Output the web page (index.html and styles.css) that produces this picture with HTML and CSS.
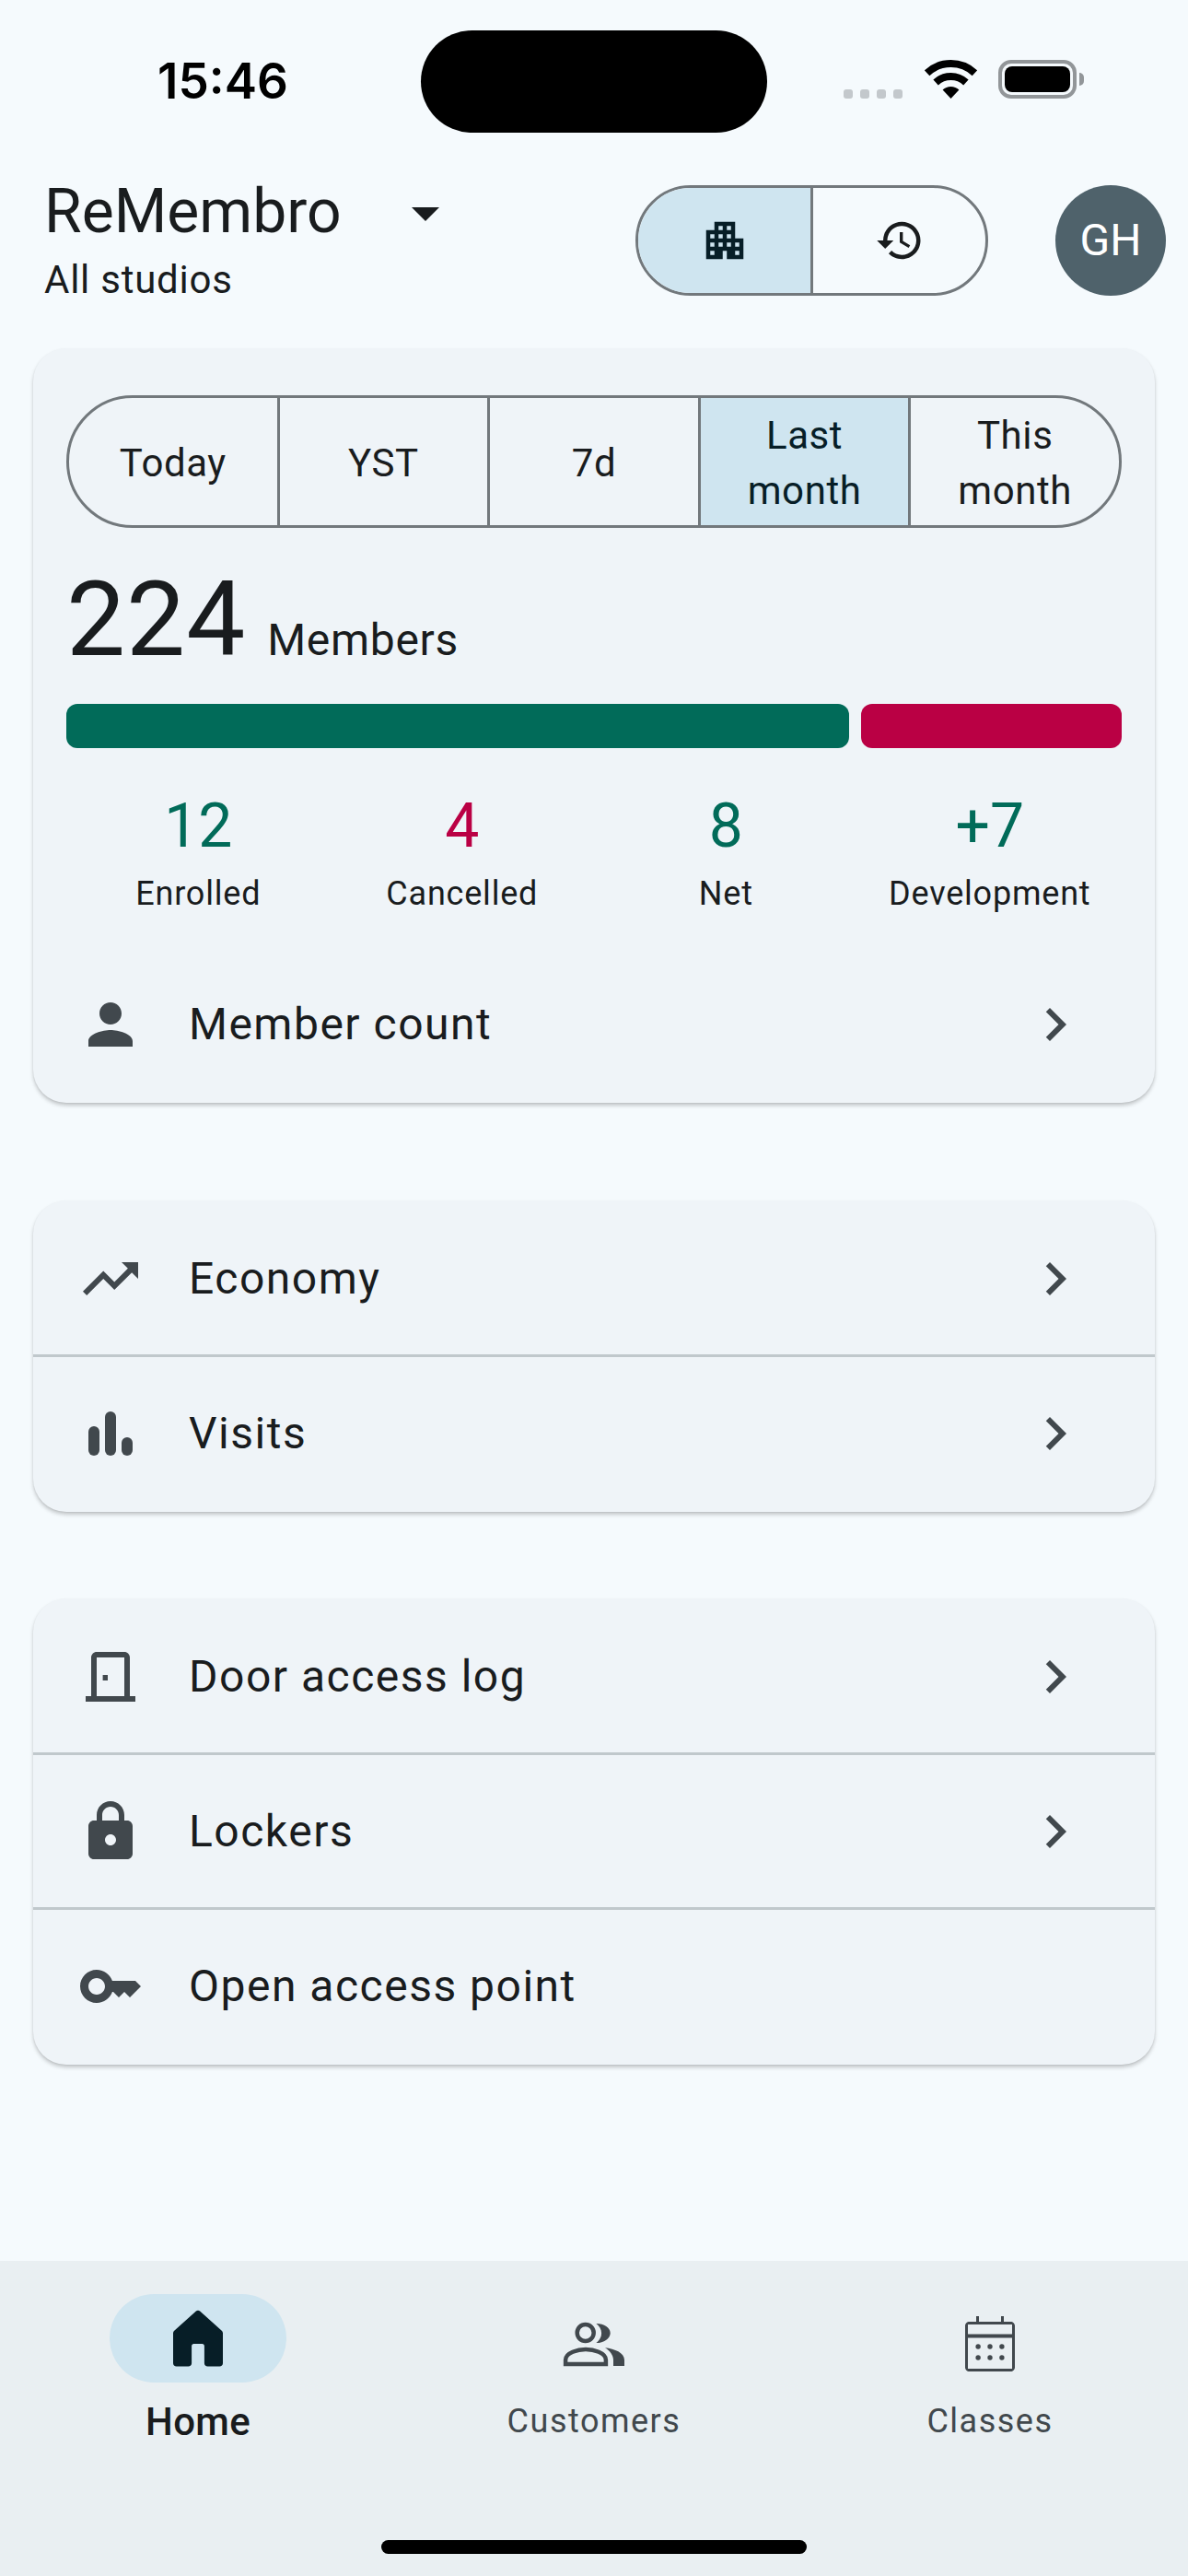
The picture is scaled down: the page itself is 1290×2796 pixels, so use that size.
FILE: index.html
```html
<!DOCTYPE html>
<html lang="en">
<head>
    <meta charset="UTF-8">
    <title>ReMembro</title>
    <link rel="stylesheet" href="styles.css">
</head>
<body>
    <div class="app">
        <div class="status-bar">
            <div class="status-time">15:46</div>
            <div class="island"></div>
            <div class="status-icons">
                <div class="signal"><span></span><span></span><span></span><span></span></div>
                <svg class="wifi" viewBox="0 0 57 42">
                    <path d="M2.6 14.2A38 38 0 0 1 54.4 14.2" fill="none" stroke="#000" stroke-width="8"/>
                    <path d="M12.1 24.5A24 24 0 0 1 44.9 24.5" fill="none" stroke="#000" stroke-width="8"/>
                    <path d="M28.5 42L19.6 32.5A13 13 0 0 1 37.4 32.5Z" fill="#000"/>
                </svg>
                <div class="battery-wrap">
                    <div class="battery"><div class="battery-level"></div></div>
                    <div class="battery-nub"></div>
                </div>
            </div>
        </div>

        <header class="top-header">
            <div class="studio">
                <div class="studio-title">
                    <span class="studio-name">ReMembro</span>
                    <svg class="caret" viewBox="0 0 24 24"><path d="M7 10l5 5 5-5z"/></svg>
                </div>
                <div class="studio-sub">All studios</div>
            </div>
            <div class="view-toggle">
                <div class="view-option selected">
                    <svg class="toggle-icon" viewBox="0 0 24 24"><path d="M17 11V3H7v4H3v14h8v-4h2v4h8V11h-4zM7 19H5v-2h2v2zm0-4H5v-2h2v2zm0-4H5V9h2v2zm4 4H9v-2h2v2zm0-4H9V9h2v2zm0-4H9V5h2v2zm4 8h-2v-2h2v2zm0-4h-2V9h2v2zm0-4h-2V5h2v2zm4 12h-2v-2h2v2zm0-4h-2v-2h2v2z"/></svg>
                </div>
                <div class="view-option">
                    <svg class="toggle-icon" viewBox="0 0 24 24"><path d="M13 3c-4.97 0-9 4.03-9 9H1l3.89 3.89.07.14L9 12H6c0-3.87 3.13-7 7-7s7 3.13 7 7-3.13 7-7 7c-1.93 0-3.68-.79-4.94-2.06l-1.42 1.42C8.27 19.99 10.51 21 13 21c4.97 0 9-4.03 9-9s-4.03-9-9-9zm-1 5v5l4.28 2.54.72-1.21-3.5-2.08V8H12z"/></svg>
                </div>
            </div>
            <div class="avatar">GH</div>
        </header>

        <section class="card card-members">
            <div class="members-body">
                <div class="period-tabs">
                    <div class="period-tab">Today</div>
                    <div class="period-tab">YST</div>
                    <div class="period-tab">7d</div>
                    <div class="period-tab selected">Last<br>month</div>
                    <div class="period-tab">This<br>month</div>
                </div>
                <div class="member-total">
                    <span class="total-number">224</span>
                    <span class="total-label">Members</span>
                </div>
                <div class="ratio-bar">
                    <div class="ratio-in"></div>
                    <div class="ratio-out"></div>
                </div>
                <div class="stats">
                    <div class="stat"><div class="stat-value good">12</div><div class="stat-label">Enrolled</div></div>
                    <div class="stat"><div class="stat-value bad">4</div><div class="stat-label">Cancelled</div></div>
                    <div class="stat"><div class="stat-value good">8</div><div class="stat-label">Net</div></div>
                    <div class="stat"><div class="stat-value good">+7</div><div class="stat-label">Development</div></div>
                </div>
            </div>
            <div class="row">
                <svg class="row-icon" viewBox="0 0 24 24"><path d="M12 12c2.21 0 4-1.79 4-4s-1.79-4-4-4-4 1.79-4 4 1.79 4 4 4zm0 2c-2.67 0-8 1.34-8 4v2h16v-2c0-2.66-5.33-4-8-4z"/></svg>
                <span class="row-text">Member count</span>
                <svg class="row-icon chevron" viewBox="0 0 24 24"><path d="M10 6L8.59 7.41 13.17 12l-4.58 4.59L10 18l6-6z"/></svg>
            </div>
        </section>

        <section class="card card-reports">
            <div class="row">
                <svg class="row-icon" viewBox="0 0 24 24"><path d="M16 6l2.29 2.29-4.88 4.88-4-4L2 16.59 3.41 18l6-6 4 4 6.3-6.29L22 12V6z"/></svg>
                <span class="row-text">Economy</span>
                <svg class="row-icon chevron" viewBox="0 0 24 24"><path d="M10 6L8.59 7.41 13.17 12l-4.58 4.59L10 18l6-6z"/></svg>
            </div>
            <div class="row">
                <svg class="row-icon" viewBox="0 0 24 24"><rect x="4" y="9.3" width="4" height="10.7" rx="2"/><rect x="10" y="4" width="4" height="16" rx="2"/><rect x="16" y="13.3" width="4" height="6.7" rx="2"/></svg>
                <span class="row-text">Visits</span>
                <svg class="row-icon chevron" viewBox="0 0 24 24"><path d="M10 6L8.59 7.41 13.17 12l-4.58 4.59L10 18l6-6z"/></svg>
            </div>
        </section>

        <section class="card card-access">
            <div class="row">
                <svg class="row-icon" viewBox="0 0 24 24"><path d="M19 19V5c0-1.1-.9-2-2-2H7c-1.1 0-2 .9-2 2v14H3v2h18v-2h-2zm-2 0H7V5h10v14zM9.200 11.300h1.800v2H9.200z"/></svg>
                <span class="row-text">Door access log</span>
                <svg class="row-icon chevron" viewBox="0 0 24 24"><path d="M10 6L8.59 7.41 13.17 12l-4.58 4.59L10 18l6-6z"/></svg>
            </div>
            <div class="row">
                <svg class="row-icon" viewBox="0 0 24 24"><path d="M18 8h-1V6c0-2.76-2.24-5-5-5S7 3.24 7 6v2H6c-1.1 0-2 .9-2 2v10c0 1.100.9 2 2 2h12c1.100 0 2-.9 2-2V10c0-1.100-.9-2-2-2zm-6 9c-1.100 0-2-.9-2-2s.9-2 2-2 2 .9 2 2-.9 2-2 2zM15 8H9V6c0-1.660 1.340-3 3-3s3 1.340 3 3v2z"/></svg>
                <span class="row-text">Lockers</span>
                <svg class="row-icon chevron" viewBox="0 0 24 24"><path d="M10 6L8.59 7.41 13.17 12l-4.58 4.59L10 18l6-6z"/></svg>
            </div>
            <div class="row">
                <svg class="row-icon" viewBox="0 0 24 24"><path d="M21 10h-8.350C11.830 7.670 9.610 6 7 6c-3.310 0-6 2.690-6 6s2.690 6 6 6c2.610 0 4.830-1.670 5.650-4H13l2 2 2-2 2 2 4-4.040L21 10zM7 15c-1.650 0-3-1.350-3-3s1.350-3 3-3 3 1.350 3 3-1.350 3-3 3z"/></svg>
                <span class="row-text">Open access point</span>
            </div>
        </section>

        <nav class="bottom-nav">
            <div class="nav-item active">
                <div class="nav-pill">
                    <svg class="nav-icon" viewBox="0 0 24 24"><path d="M11.300 2.200c.4-.4 1-.4 1.400 0l7.700 6.900c.4.3.6.7.6 1.100V21c0 .7-.5 1.200-1.200 1.200h-4.300c-.7 0-1.200-.5-1.200-1.200v-6.200c0-.5-.3-.8-.8-.8h-3c-.5 0-.8.3-.8.800V21c0 .7-.5 1.200-1.200 1.200H4.200C3.500 22.200 3 21.700 3 21V10.200c0-.4.2-.8.6-1.100z"/></svg>
                </div>
                <div class="nav-label">Home</div>
            </div>
            <div class="nav-item">
                <svg class="nav-icon" viewBox="0 0 24 24">
                    <circle cx="8.900" cy="8" r="3" fill="none" stroke="#41484d" stroke-width="1.500"/>
                    <path d="M1.700 19.300v-1.500c0-2.600 4.500-3.800 7.300-3.800s7.300 1.200 7.300 3.800v1.500z" fill="none" stroke="#41484d" stroke-width="1.500"/>
                    <path d="M12.800 4.700c2.900 0 5.100 1.500 5.100 3.400s-2.200 3.600-5.100 3.600c1.200-.9 1.900-2.100 1.900-3.500s-.7-2.600-1.900-3.500z"/>
                    <path d="M16 13.400c3.500.4 7 1.800 7 4.400V20h-4v-2.200c0-1.700-1.200-3.300-3-4.400z"/>
                </svg>
                <div class="nav-label">Customers</div>
            </div>
            <div class="nav-item">
                <svg class="nav-icon" viewBox="0 0 24 24">
                    <path d="M7 2h1v2h8V2h1v2h2.500c.8 0 1.500.7 1.500 1.500v15c0 .8-.7 1.500-1.500 1.500h-15C3.700 22 3 21.300 3 20.500v-15C3 4.700 3.700 4 4.500 4H7zM4 5v3.500h16V5zm0 4.800V21h16V9.800z" fill-rule="evenodd"/>
                    <circle cx="7.700" cy="13" r=".9"/><circle cx="12" cy="13" r=".9"/><circle cx="16.300" cy="13" r=".9"/>
                    <circle cx="7.700" cy="17" r=".9"/><circle cx="12" cy="17" r=".9"/><circle cx="16.300" cy="17" r=".9"/>
                </svg>
                <div class="nav-label">Classes</div>
            </div>
            <div class="home-indicator"></div>
        </nav>
    </div>
</body>
</html>
```

FILE: styles.css
```css
* {
    box-sizing: border-box;
}
html, body {
    margin: 0;
    padding: 0;
}
body {
    font-family: Roboto, "Liberation Sans", sans-serif;
    background-color: #f5fafd;
    color: #191c1e;
}
.app {
    width: 1290px;
    height: 2796px;
    display: flex;
    flex-direction: column;
    overflow: hidden;
}

/* status bar */
.status-bar {
    display: flex;
    padding-top: 33px;
    height: 144px;
}
.status-time {
    width: 457px;
    padding-left: 171px;
    margin-top: 25px;
    font-family: Inter, sans-serif;
    font-size: 53px;
    font-weight: 600;
    line-height: 60px;
    color: #000;
}
.island {
    width: 376px;
    height: 111px;
    background-color: #000;
    border-radius: 56px;
}
.status-icons {
    display: flex;
    align-items: flex-end;
    height: 42px;
    margin-top: 32px;
    margin-left: 83px;
}
.signal {
    display: flex;
    gap: 8px;
    margin-right: 24px;
}
.signal span {
    width: 10px;
    height: 10px;
    border-radius: 3px;
    background-color: #c3c8cc;
}
.wifi {
    width: 57px;
    height: 42px;
    margin-right: 23px;
}
.battery-wrap {
    display: flex;
    align-items: center;
    gap: 3px;
}
.battery {
    width: 85px;
    height: 42px;
    padding: 3px;
    border: 4px solid #929699;
    border-radius: 14px;
}
.battery-level {
    height: 100%;
    background-color: #000;
    border-radius: 8px;
}
.battery-nub {
    width: 5px;
    height: 14px;
    background-color: #929699;
    border-radius: 0 5px 5px 0;
}

/* header */
.top-header {
    display: flex;
    align-items: center;
    height: 120px;
    margin-top: 57px;
    padding: 0 24px 0 48px;
}
.studio {
    padding-top: 5px;
}
.studio-title {
    display: flex;
    align-items: center;
    height: 72px;
}
.studio-name {
    font-size: 66px;
    line-height: 72px;
}
.caret {
    width: 72px;
    height: 72px;
    margin-left: 55px;
    margin-top: 3px;
    fill: #191c1e;
}
.studio-sub {
    font-size: 42px;
    line-height: 60px;
    margin-top: 8px;
    letter-spacing: 0.75px;
}
.view-toggle {
    display: flex;
    width: 383px;
    height: 120px;
    margin-left: auto;
    border: 3px solid #72787c;
    border-radius: 60px;
    overflow: hidden;
}
.view-option {
    flex: 1;
    display: flex;
    align-items: center;
    justify-content: center;
}
.view-option + .view-option {
    border-left: 3px solid #72787c;
}
.view-option.selected {
    background-color: #cfe5f0;
}
.toggle-icon {
    width: 54px;
    height: 54px;
    fill: #191c1e;
}
.view-option.selected .toggle-icon {
    fill: #071e27;
}
.avatar {
    width: 120px;
    height: 120px;
    margin-left: 73px;
    border-radius: 50%;
    background-color: #4f626b;
    color: #fff;
    font-size: 48px;
    line-height: 120px;
    text-align: center;
}

/* cards */
.card {
    margin: 0 36px;
    padding-bottom: 2.5px;
    background-color: #eff4f8;
    border-radius: 36px;
    box-shadow: 0 3px 4px rgba(0, 0, 0, 0.2), 0 1px 2px rgba(0, 0, 0, 0.06);
    overflow: hidden;
}
.card-members {
    margin-top: 57px;
}
.card-reports {
    margin-top: 106px;
    padding-top: 2.5px;
}
.card-access {
    margin-top: 94px;
    padding-top: 2.5px;
}
.members-body {
    padding: 51px 36px 35px;
}
.period-tabs {
    display: flex;
    height: 144px;
    border: 3px solid #72787c;
    border-radius: 72px;
    overflow: hidden;
}
.period-tab {
    flex: 1;
    display: flex;
    align-items: center;
    justify-content: center;
    padding-top: 3px;
    text-align: center;
    font-size: 42px;
    line-height: 60px;
    letter-spacing: 0.6px;
}
.period-tab + .period-tab {
    border-left: 3px solid #72787c;
}
.period-tab.selected {
    background-color: #cfe5f0;
    color: #071e27;
}
.member-total {
    display: flex;
    align-items: baseline;
    margin-top: 39px;
    height: 120px;
}
.total-number {
    font-size: 114px;
    line-height: 120px;
    letter-spacing: 1px;
}
.total-label {
    font-size: 48px;
    margin-left: 23px;
    letter-spacing: 0.7px;
}
.ratio-bar {
    display: flex;
    gap: 13px;
    height: 48px;
    margin-top: 32px;
}
.ratio-in {
    flex: 850;
    background-color: #016b59;
    border-radius: 12px;
}
.ratio-out {
    flex: 283;
    background-color: #ba0044;
    border-radius: 12px;
}
.stats {
    display: grid;
    grid-template-columns: repeat(4, 1fr);
    margin-top: 46px;
}
.stat {
    text-align: center;
}
.stat-value {
    font-size: 66px;
    line-height: 78px;
}
.good {
    color: #016b59;
}
.bad {
    color: #ba0044;
}
.stat-label {
    font-size: 36px;
    line-height: 48px;
    margin-top: 10px;
    letter-spacing: 0.8px;
}

/* list rows */
.row {
    display: flex;
    align-items: center;
    height: 165px;
    padding: 0 72px 0 48px;
}
.row + .row {
    border-top: 3px solid #c0c8cc;
    height: 168px;
}
.row-icon {
    width: 72px;
    height: 72px;
    flex: none;
    fill: #41484d;
}
.row-text {
    flex: 1;
    margin-left: 49px;
    font-size: 48px;
    letter-spacing: 1.5px;
}

/* bottom nav */
.bottom-nav {
    position: relative;
    display: grid;
    grid-template-columns: repeat(3, 1fr);
    height: 342px;
    margin-top: auto;
    background-color: #e9eff2;
}
.nav-item {
    display: flex;
    flex-direction: column;
    align-items: center;
    padding-top: 54px;
}
.nav-item.active {
    padding-top: 36px;
}
.nav-pill {
    display: flex;
    align-items: center;
    justify-content: center;
    width: 192px;
    height: 96px;
    border-radius: 48px;
    background-color: #cfe5f0;
}
.nav-icon {
    width: 72px;
    height: 72px;
    fill: #41484d;
}
.nav-pill .nav-icon {
    fill: #071e27;
}
.nav-label {
    margin-top: 24px;
    font-size: 36px;
    line-height: 48px;
    letter-spacing: 1.5px;
    color: #41484d;
}
.active .nav-label {
    margin-top: 16px;
    font-size: 42px;
    line-height: 54px;
    font-weight: 500;
    letter-spacing: 0.3px;
    color: #191c1e;
}
.home-indicator {
    position: absolute;
    left: 414px;
    bottom: 24px;
    width: 462px;
    height: 15px;
    border-radius: 8px;
    background-color: #000;
}
```
